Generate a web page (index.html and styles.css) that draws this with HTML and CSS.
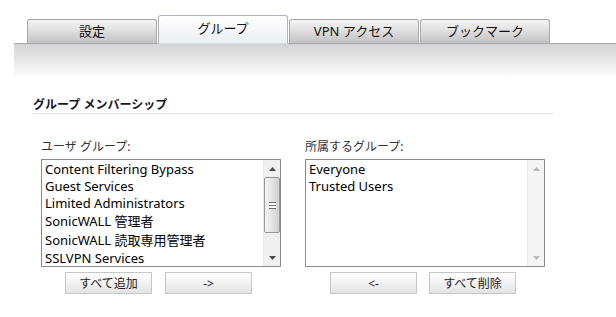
FILE: index.html
```html
<!DOCTYPE html>
<html lang="ja">
<head>
	<meta charset="UTF-8">
	<title>グループ</title>
	<link rel="stylesheet" href="styles.css">
</head>
<body>
<div class="tabs">
	<div class="tab">設定</div>
	<div class="tab active">グループ</div>
	<div class="tab">VPN アクセス</div>
	<div class="tab">ブックマーク</div>
</div>
<div class="band"></div>

<div class="content">
	<h2 class="heading">グループ メンバーシップ</h2>

	<div class="columns">
		<div class="col">
			<div class="label">ユーザ グループ:</div>
			<div class="listbox">
				<ul class="items">
					<li>Content Filtering Bypass</li>
					<li>Guest Services</li>
					<li>Limited Administrators</li>
					<li class="cjk">SonicWALL 管理者</li>
					<li class="cjk">SonicWALL 読取専用管理者</li>
					<li>SSLVPN Services</li>
				</ul>
				<div class="scrollbar">
					<div class="arrow">
						<svg width="7" height="4" viewBox="0 0 7 4"><path d="M3.5 0L7 4H0z" fill="#4a4a4a"/></svg>
					</div>
					<div class="track">
						<div class="thumb">
							<span class="grip"></span>
						</div>
					</div>
					<div class="arrow">
						<svg width="7" height="4" viewBox="0 0 7 4"><path d="M0 0h7L3.5 4z" fill="#4a4a4a"/></svg>
					</div>
				</div>
			</div>
			<div class="buttons">
				<button class="btn">すべて追加</button>
				<button class="btn">-&gt;</button>
			</div>
		</div>

		<div class="col">
			<div class="label">所属するグループ:</div>
			<div class="listbox">
				<ul class="items">
					<li>Everyone</li>
					<li>Trusted Users</li>
				</ul>
				<div class="scrollbar disabled">
					<div class="arrow">
						<svg width="7" height="4" viewBox="0 0 7 4"><path d="M3.5 0L7 4H0z" fill="#b8b8b8"/></svg>
					</div>
					<div class="track"></div>
					<div class="arrow">
						<svg width="7" height="4" viewBox="0 0 7 4"><path d="M0 0h7L3.5 4z" fill="#b8b8b8"/></svg>
					</div>
				</div>
			</div>
			<div class="buttons right">
				<button class="btn">&lt;-</button>
				<button class="btn">すべて削除</button>
			</div>
		</div>
	</div>
</div>
</body>
</html>
```

FILE: styles.css
```css
*{
    margin: 0;
    padding: 0;
    box-sizing: border-box;
}

body{
    width: 616px;
    height: 317px;
    background: #fff;
    font-family: "Noto Sans", "Noto Sans CJK JP", sans-serif;
    color: #000;
    overflow: hidden;
}

/* tabs */
.tabs{
    display: flex;
    align-items: flex-end;
    gap: 1px;
    height: 43px;
    padding-left: 27px;
}

.tab{
    width: 130px;
    height: 24px;
    border: 1px solid #a9a9a9;
    border-bottom: none;
    border-radius: 3px 3px 0 0;
    background: linear-gradient(#f4f4f4, #e2e2e2 40%, #c2c2c2);
    font-size: 13px;
    line-height: 22px;
    text-align: center;
    color: #111;
}

.tab.active{
    height: 29px;
    margin-bottom: -1px;
    position: relative;
    z-index: 1;
    border-color: #b4b4bc;
    background: linear-gradient(#ffffff, #f6f6f8 50%, #eceef2);
    border-bottom: 1px solid #d6dbe8;
    line-height: 25px;
}

.band{
    margin-left: 14px;
    height: 35px;
    border-top: 1px solid #a6a6ae;
    background: linear-gradient(#d4d4d4, #e6e6e6 45%, #ffffff);
}

/* body */
.content{
    padding: 20px 0 0 33px;
}

.heading{
    width: 520px;
    font-size: 12px;
    font-weight: bold;
    line-height: 14px;
    color: #141428;
    padding-bottom: 1px;
    border-bottom: 1px solid #e2e2e2;
}

.columns{
    display: flex;
    gap: 24px;
    margin: 26px 0 0 8px;
}

.col{
    width: 240px;
}

.label{
    font-size: 12px;
    line-height: 14px;
    color: #333;
    margin-bottom: 5px;
}

.listbox{
    display: flex;
    height: 108px;
    border: 1px solid #8b8b8b;
    background: #fff;
    overflow: hidden;
}

.items{
    flex: 1;
    list-style: none;
    padding: 1px 0 0 3px;
    font-size: 13px;
    line-height: 17px;
}

.items li{
    height: 17px;
    white-space: nowrap;
}

.items li.cjk{
    height: 19px;
    line-height: 19px;
}

.scrollbar{
    width: 17px;
    display: flex;
    flex-direction: column;
    background: #f0f0f0;
    border-left: 1px solid #e6e6e6;
}

.arrow{
    height: 17px;
    display: flex;
    align-items: center;
    justify-content: center;
}

.track{
    flex: 1;
}

.thumb{
    height: 56px;
    margin: 0 0 0 0;
    border: 1px solid #979797;
    border-radius: 2px;
    background: linear-gradient(90deg, #f3f3f3, #e4e4e4 50%, #cfcfcf);
    display: flex;
    align-items: center;
    justify-content: center;
}

.grip{
    width: 7px;
    height: 7px;
    border-top: 1px solid #6a6a6a;
    border-bottom: 1px solid #6a6a6a;
    background: linear-gradient(#fff 2px, #6a6a6a 2px, #6a6a6a 3px, #fff 3px);
}

.scrollbar.disabled{
    background: #f4f4f4;
}

/* buttons */
.buttons{
    display: flex;
    gap: 13px;
    padding: 5px 0 0 24px;
}

.buttons.right{
    gap: 12px;
    padding-left: 25px;
}

.btn{
    width: 87px;
    height: 22px;
    border: 1px solid #c6c6c6;
    background: linear-gradient(#ffffff, #f2f2f2 50%, #e2e2e2);
    font-family: "Noto Sans", "Noto Sans CJK JP", sans-serif;
    font-size: 12px;
    color: #222;
}
```
